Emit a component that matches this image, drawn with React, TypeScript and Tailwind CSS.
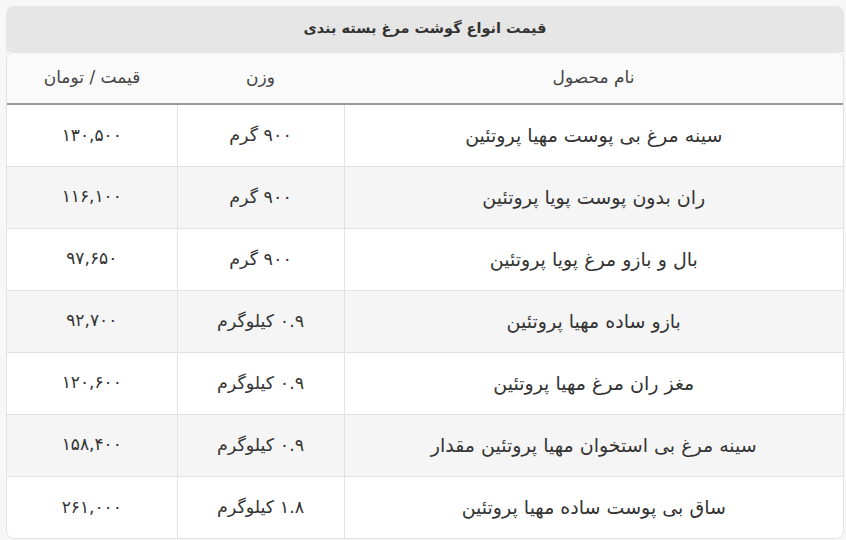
const rows = [
  { name: "سینه مرغ بی پوست مهیا پروتئین", weight: "۹۰۰ گرم", price: "۱۳۰,۵۰۰" },
  { name: "ران بدون پوست پویا پروتئین", weight: "۹۰۰ گرم", price: "۱۱۶,۱۰۰" },
  { name: "بال و بازو مرغ پویا پروتئین", weight: "۹۰۰ گرم", price: "۹۷,۶۵۰" },
  { name: "بازو ساده مهیا پروتئین", weight: "۰.۹ کیلوگرم", price: "۹۲,۷۰۰" },
  { name: "مغز ران مرغ مهیا پروتئین", weight: "۰.۹ کیلوگرم", price: "۱۲۰,۶۰۰" },
  { name: "سینه مرغ بی استخوان مهیا پروتئین مقدار", weight: "۰.۹ کیلوگرم", price: "۱۵۸,۴۰۰" },
  { name: "ساق بی پوست ساده مهیا پروتئین", weight: "۱.۸ کیلوگرم", price: "۲۶۱,۰۰۰" },
];

export default function App() {
  return (
    <div
      dir="rtl"
      className="h-[540px] w-[846px] bg-[#f7f7f7] pt-[6px] pl-[6px] pr-[2px] text-[#333]"
      style={{ fontFamily: '"DejaVu Sans", "Noto Sans", sans-serif' }}
    >
      {/* title bar */}
      <div className="flex h-[46px] items-center justify-center rounded-t-[8px] bg-[#e6e6e6] text-[14.5px] font-bold text-[#333]">
        قیمت انواع گوشت مرغ بسته بندی
      </div>

      <div className="overflow-hidden rounded-[8px] border border-[#e2e2e2] bg-white">
        <table className="w-full table-fixed border-collapse">
          <colgroup>
            <col className="w-[499px]" />
            <col className="w-[167px]" />
            <col />
          </colgroup>
          <thead>
            <tr className="h-[51px] border-b-2 border-[#999] bg-[#fafafa] text-[17px] text-[#444]">
              <th className="font-normal">نام محصول</th>
              <th className="font-normal">وزن</th>
              <th className="font-normal">قیمت / تومان</th>
            </tr>
          </thead>
          <tbody>
            {rows.map((r, i) => (
              <tr
                key={i}
                className={`h-[62px] ${i % 2 === 1 ? "bg-[#f5f5f5]" : "bg-white"} ${
                  i < rows.length - 1 ? "border-b border-[#e2e2e2]" : ""
                }`}
              >
                <td className="text-center text-[19px]">{r.name}</td>
                <td className="border-r border-l border-[#e2e2e2] text-center text-[17.5px]">{r.weight}</td>
                <td className="text-center text-[17px]">{r.price}</td>
              </tr>
            ))}
          </tbody>
        </table>
      </div>
    </div>
  );
}
